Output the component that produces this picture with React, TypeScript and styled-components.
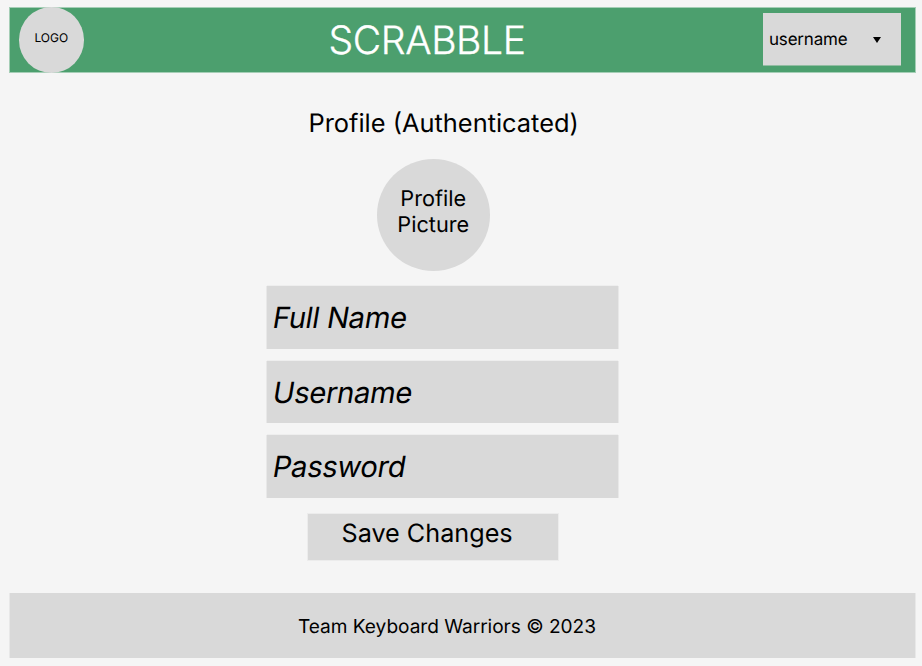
import React from "react";
import styled, { createGlobalStyle } from "styled-components";

const Global = createGlobalStyle`
  * { box-sizing: border-box; }
  body {
    margin: 0; background: #f5f5f5; color: #000;
    font-family: Inter, sans-serif; text-rendering: geometricPrecision;
  }
`;
const Page = styled.div`
  width: 922px; height: 666px; padding: 8px 7px 8px 10px;
  display: flex; flex-direction: column; overflow: hidden;
`;
const Header = styled.header`
  height: 64px; flex: none; background: #4c9f6e; display: flex; align-items: center;
  padding: 0 14px 0 8.5px; box-shadow: 0 0 0 1px #a5ceb6;
`;
const Logo = styled.div`
  width: 65.5px; height: 66px; border-radius: 50%; background: #d9d9d9;
  display: flex; align-items: center; justify-content: center;
  font-size: 12px; padding-bottom: 5px; flex: none;
`;
const Brand = styled.h1`
  margin: 1px 0 0 244.5px; color: #fff; font-weight: 300; font-size: 39px; line-height: 47px;
  letter-spacing: -0.35px; white-space: nowrap; -webkit-text-stroke: 0.35px #fff;
`;
const UserMenu = styled.button`
  margin: 0 0 2px auto; width: 138px; height: 52px; border: 0; border-radius: 0; background: #d9d9d9;
  display: flex; align-items: center; justify-content: space-between; padding: 2px 20px 0 6px;
  font: 400 17px/21px Inter, sans-serif; letter-spacing: -0.2px; color: #000;
  text-rendering: inherit; box-shadow: 0 1px 0 #92bca2;
`;
const Main = styled.main`
  flex: 1; display: flex; flex-direction: column; width: 351px; margin-left: 257px;
`;
const Title = styled.h2`
  margin: 36px 0 0 41.5px; font-weight: 400; font-size: 25.4px; line-height: 31px; white-space: nowrap;
`;
const Avatar = styled.div`
  margin: 20px 0 0 109.5px; width: 113.5px; height: 112px; border-radius: 50%; background: #d9d9d9;
  padding-top: 27px; text-align: center; font-size: 21.7px; line-height: 26px;
`;
const Form = styled.form`
  margin-top: 15px; display: grid; grid-template-rows: 63px 62px 63px; row-gap: 12px;
`;
const Field = styled.div`
  display: flex; align-items: center; padding: 3px 6.3px 0; background: #d9d9d9;
  box-shadow: -1px 0 0 #e8e8e8, 1px 0 0 #e8e8e8, 0 -1px 0 #eeeeee;
`;
/* Slanted roman letterforms rather than the cursive italic. */
const Hint = styled.span`
  display: inline-block; font-size: 29.2px; line-height: 36px; letter-spacing: -0.33px;
  transform: skewX(-9.4deg);
`;
const Save = styled.button`
  margin: 16px 0 0 40.5px; width: 250.5px; height: 46px; border: 0; background: #d9d9d9; border-radius: 0;
  padding: 0 0 6px 34px; text-align: left; font: 400 25.2px/31px Inter, sans-serif; color: #000;
  text-rendering: inherit; box-shadow: 0 0 0 1px #ececec;
`;
const Footer = styled.footer`
  height: 65px; flex: none; background: #d9d9d9; padding: 21px 0 0 288px; font-size: 19.1px; line-height: 24px;
  letter-spacing: -0.03px; box-shadow: -1px 0 0 #e8e8e8, 1px 0 0 #e8e8e8;
`;

export default function App() {
  return (
    <Page>
      <Global />
      <Header>
        <Logo>LOGO</Logo>
        <Brand>SCRABBLE</Brand>
        <UserMenu>
          username
          <svg width="8" height="7" viewBox="0 0 8 7"><path d="M0 .1h8L4 6.1z" /></svg>
        </UserMenu>
      </Header>
      <Main>
        <Title>Profile (Authenticated)</Title>
        <Avatar>Profile<br />Picture</Avatar>
        <Form>
          <Field><Hint>Full Name</Hint></Field>
          <Field><Hint>Username</Hint></Field>
          <Field><Hint>Password</Hint></Field>
        </Form>
        <Save>Save Changes</Save>
      </Main>
      <Footer>Team Keyboard Warriors © 2023</Footer>
    </Page>
  );
}
